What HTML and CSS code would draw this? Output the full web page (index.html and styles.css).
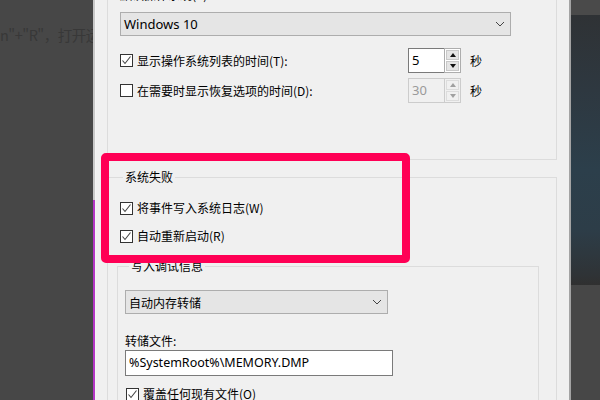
FILE: index.html
```html
<!DOCTYPE html>
<html lang="zh-CN">
<head>
<meta charset="utf-8">
<title>启动和故障恢复</title>
<link rel="stylesheet" href="styles.css">
</head>
<body>
<div class="page">
  <div class="left-pane">
    <div class="bg-text">n"+"R"，打开运行</div>
  </div>
  <div class="dialog">
    <div class="edge-left"></div>
    <div class="dialog-body">
      <div class="group group-top">
        <div class="cut-label">默认操作系统(S):</div>
        <div class="combo combo-wide">
          <span>Windows 10</span>
          <svg class="chev" width="10" height="6" viewBox="0 0 10 6"><polyline points="1,1 5,5 9,1" fill="none" stroke="#444" stroke-width="1"/></svg>
        </div>
        <div class="spin-row first">
          <label class="check-line">
            <span class="cb checked"><svg width="11" height="11" viewBox="0 0 11 11"><polyline points="1.5,5.5 4,8.5 9.5,1.5" fill="none" stroke="#444" stroke-width="1.1"/></svg></span>
            <span class="cb-text">显示操作系统列表的时间(T):</span>
          </label>
          <div class="spinner">
            <div class="spin-input">5</div>
            <div class="spin-btns">
              <div class="spin-btn"><span class="tri up"></span></div>
              <div class="spin-btn"><span class="tri down"></span></div>
            </div>
          </div>
          <span class="unit">秒</span>
        </div>
        <div class="spin-row second">
          <label class="check-line">
            <span class="cb"></span>
            <span class="cb-text">在需要时显示恢复选项的时间(D):</span>
          </label>
          <div class="spinner disabled">
            <div class="spin-input">30</div>
            <div class="spin-btns">
              <div class="spin-btn"><span class="tri up"></span></div>
              <div class="spin-btn"><span class="tri down"></span></div>
            </div>
          </div>
          <span class="unit">秒</span>
        </div>
      </div>

      <fieldset class="group group-fail">
        <legend>系统失败</legend>
        <label class="check-line row-fail">
          <span class="cb checked"><svg width="11" height="11" viewBox="0 0 11 11"><polyline points="1.5,5.5 4,8.5 9.5,1.5" fill="none" stroke="#444" stroke-width="1.1"/></svg></span>
          <span class="cb-text">将事件写入系统日志(W)</span>
        </label>
        <label class="check-line row-fail second-fail">
          <span class="cb checked"><svg width="11" height="11" viewBox="0 0 11 11"><polyline points="1.5,5.5 4,8.5 9.5,1.5" fill="none" stroke="#444" stroke-width="1.1"/></svg></span>
          <span class="cb-text">自动重新启动(R)</span>
        </label>

        <fieldset class="group group-debug">
          <legend>写入调试信息</legend>
          <div class="combo combo-dump">
            <span>自动内存转储</span>
            <svg class="chev" width="10" height="6" viewBox="0 0 10 6"><polyline points="1,1 5,5 9,1" fill="none" stroke="#444" stroke-width="1"/></svg>
          </div>
          <div class="field-label">转储文件:</div>
          <div class="textbox">%SystemRoot%\MEMORY.DMP</div>
          <label class="check-line row-over">
            <span class="cb checked"><svg width="11" height="11" viewBox="0 0 11 11"><polyline points="1.5,5.5 4,8.5 9.5,1.5" fill="none" stroke="#444" stroke-width="1.1"/></svg></span>
            <span class="cb-text">覆盖任何现有文件(O)</span>
          </label>
        </fieldset>
      </fieldset>
    </div>
    <div class="edge-right"></div>
  </div>
  <div class="right-pane"></div>
  <div class="highlight"></div>
</div>
</body>
</html>
```

FILE: styles.css
```css
html, body {
  margin: 0;
  padding: 0;
}
body {
  width: 600px;
  height: 400px;
  overflow: hidden;
  background: #474747;
  font-family: "Noto Sans", "Noto Sans CJK SC", sans-serif;
  font-size: 12px;
  color: #000;
}
.page {
  position: relative;
  display: flex;
  width: 600px;
  height: 400px;
  overflow: hidden;
}
.left-pane {
  flex: 0 0 93px;
  width: 93px;
  background: #474747;
  overflow: hidden;
}
.bg-text {
  white-space: nowrap;
  font-family: "Noto Sans CJK SC", sans-serif;
  font-size: 14.5px;
  line-height: 20px;
  letter-spacing: -0.5px;
  color: #383838;
  margin-top: 25px;
  margin-left: 0;
}
.dialog {
  flex: 0 0 478px;
  display: flex;
  background: #f0f0f0;
}
.edge-left {
  flex: 0 0 2px;
  background: linear-gradient(to bottom, #c8c8c8 0, #c8c8c8 200px, #b336c4 200px, #b336c4 100%);
}
.edge-right {
  flex: 0 0 2px;
  background: #a4a4a4;
}
.dialog-body {
  flex: 1;
  padding: 0 12px 0 11px;
  background: #f0f0f0;
  border-left: 1px solid #f4f4f4;
}
.right-pane {
  flex: 1;
  background: linear-gradient(to bottom,
    #4a4a4a 0, #4a4a4a 15px,
    #2f3235 15px, #2e3840 90px, #2c3f4b 170px, #2d3d48 230px, #2f3336 275px, #303030 285px,
    #474747 285px, #474747 100%);
}

/* group boxes */
.group {
  border: 1px solid #dcdcdc;
  margin: 0;
  min-width: 0;
}
.group legend {
  padding: 0 2px;
  line-height: 16px;
  font-size: 12px;
  font-family: "Noto Sans CJK SC", sans-serif;
}
.group-top {
  border-top: none;
  padding: 0 12px 56px 12px;
}
.cut-label {
  margin-top: -13px;
  line-height: 16px;
  font-family: "Noto Sans CJK SC", sans-serif;
}
.combo {
  display: flex;
  align-items: center;
  justify-content: space-between;
  box-sizing: border-box;
  height: 24px;
  background: #e5e5e5;
  border: 1px solid #adadad;
  padding: 0 5px 0 3px;
}
.combo-wide {
  margin-top: 9px;
  width: 391px;
  font-size: 13px;
}
.combo-wide span {
  font-family: "Noto Sans", sans-serif;
}
.chev {
  display: block;
}
.spin-row {
  display: flex;
  align-items: center;
  height: 25px;
}
.spin-row.first { margin-top: 12px; }
.spin-row.second { margin-top: 5px; }
.spin-row .check-line {
  width: 288px;
}
.check-line {
  display: flex;
  align-items: center;
  gap: 4px;
  font-family: "Noto Sans CJK SC", sans-serif;
  line-height: 16px;
}
.cb {
  box-sizing: border-box;
  width: 13px;
  height: 13px;
  border: 1px solid #333;
  background: #fff;
  display: flex;
  align-items: center;
  justify-content: center;
  flex: none;
}
.cb svg { display: block; }
.spinner {
  display: flex;
  width: 53px;
  height: 25px;
  box-sizing: border-box;
}
.spin-input {
  box-sizing: border-box;
  width: 36px;
  height: 25px;
  border: 1px solid #7a7a7a;
  border-right: none;
  background: #fff;
  font-family: "Noto Sans", sans-serif;
  font-size: 13px;
  line-height: 23px;
  padding-left: 3px;
}
.spin-btns {
  box-sizing: border-box;
  width: 17px;
  height: 25px;
  border: 1px solid #adadad;
  background: #fff;
  display: flex;
  flex-direction: column;
  gap: 1px;
  padding: 1px;
}
.spin-btn {
  flex: 1;
  background: #e5e5e5;
  border: 1px solid #c8c8c8;
  display: flex;
  align-items: center;
  justify-content: center;
}
.tri {
  width: 0;
  height: 0;
  border-left: 3.5px solid transparent;
  border-right: 3.5px solid transparent;
}
.tri.up { border-bottom: 4px solid #111; }
.tri.down { border-top: 4px solid #111; }
.spinner.disabled .spin-input {
  border-color: #cccccc;
  background: #f0f0f0;
  color: #9a9a9a;
}
.spinner.disabled .spin-btns {
  border-color: #cccccc;
  background: #f0f0f0;
}
.spinner.disabled .spin-btn {
  background: #f0f0f0;
  border-color: #dcdcdc;
}
.spinner.disabled .tri.up { border-bottom-color: #a0a0a0; }
.spinner.disabled .tri.down { border-top-color: #a0a0a0; }
.unit {
  margin-left: 9px;
  font-family: "Noto Sans CJK SC", sans-serif;
}

.group-fail {
  margin-top: 9px;
  padding: 0 17px 0 9px;
}
.group-fail > legend {
  margin-left: 6px;
}
.row-fail {
  height: 20px;
  margin-left: 3px;
}
.group-fail > .row-fail:first-of-type {
  margin-top: 13px;
}
.row-fail.second-fail {
  margin-top: 8px;
}
.group-debug {
  margin-top: 12px;
  padding: 16px 10px 20px 7px;
}
.group-debug > legend {
  margin-left: 4px;
}
.combo-dump {
  width: 263px;
  font-family: "Noto Sans CJK SC", sans-serif;
}
.field-label {
  margin-top: 19px;
  line-height: 16px;
  font-family: "Noto Sans CJK SC", sans-serif;
}
.textbox {
  box-sizing: border-box;
  margin-top: 1px;
  width: 268px;
  height: 26px;
  border: 1px solid #7a7a7a;
  background: #fff;
  font-family: "Noto Sans", sans-serif;
  font-size: 12.5px;
  line-height: 24px;
  padding-left: 3px;
}
.row-over {
  margin-top: 8px;
  margin-left: 1px;
  height: 20px;
}

/* overlay highlight box */
.highlight {
  position: absolute;
  left: 101px;
  top: 153px;
  width: 309px;
  height: 110px;
  box-sizing: border-box;
  border: 8px solid #ff0055;
  border-radius: 5px;
}
```
